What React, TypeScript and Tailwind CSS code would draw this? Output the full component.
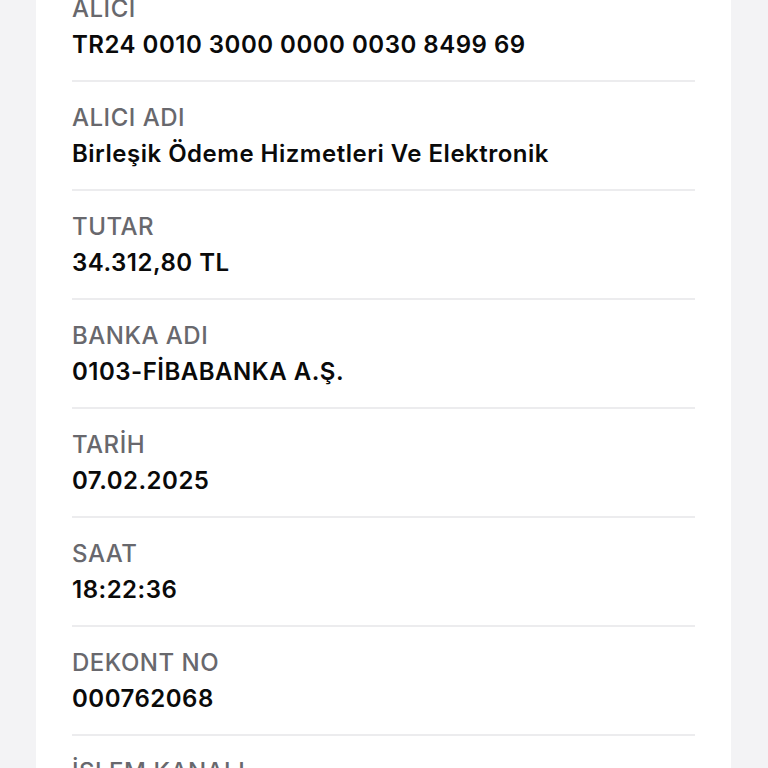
import React from "react";

const rows: [string, string][] = [
  ["ALICI", "TR24 0010 3000 0000 0030 8499 69"],
  ["ALICI ADI", "Birleşik Ödeme Hizmetleri Ve Elektronik"],
  ["TUTAR", "34.312,80 TL"],
  ["BANKA ADI", "0103-FİBABANKA A.Ş."],
  ["TARİH", "07.02.2025"],
  ["SAAT", "18:22:36"],
  ["DEKONT NO", "000762068"],
  ["İŞLEM KANALI", "Mobil"],
];

export default function App() {
  return (
    <div
      className="flex h-[768px] w-[768px] overflow-hidden bg-[#f3f3f5]"
      style={{ fontFamily: "Inter, Lato, 'Noto Sans', sans-serif" }}
    >
      <div className="ml-[36px] flex h-full w-[695px] flex-col overflow-hidden bg-white px-[36px]">
        <div className="mt-[-29px] flex flex-col">
          {rows.map(([label, value]) => (
            <div
              key={label}
              className="flex flex-col border-t-2 border-[#ececee] pt-[18px] pb-[17px]"
            >
              <div className="text-[24px] leading-[36px] font-medium tracking-[0.5px] text-[#68686d]">
                {label}
              </div>
              <div className="text-[24px] leading-[36px] font-semibold tracking-[0.5px] text-[#0a0a0a]">
                {value}
              </div>
            </div>
          ))}
        </div>
      </div>
    </div>
  );
}
